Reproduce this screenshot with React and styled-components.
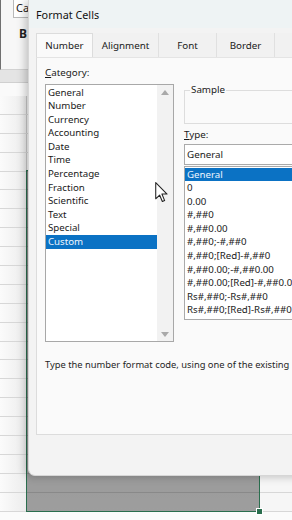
import React from 'react';
import styled, { createGlobalStyle } from 'styled-components';

const Global = createGlobalStyle`
  html, body { margin: 0; padding: 0; }
  body {
    width: 292px; height: 520px; overflow: hidden;
    font-family: "Noto Sans", "Open Sans", "DejaVu Sans", sans-serif;
    color: #1a1a1a;
  }
`;

const Page = styled.div`
  position: relative;
  width: 292px;
  height: 520px;
  overflow: hidden;
  background: #fbfbfb;
`;

/* ---------- spreadsheet behind ---------- */
const Sheet = styled.div`
  display: flex;
  flex-direction: column;
  width: 100%;
  height: 100%;
`;

const Ribbon = styled.div`
  flex: none;
  height: 70px;
  box-sizing: border-box;
  background: #f7f7f7;
  border-left: 1px solid #707070;
  border-bottom: 1px solid #d2d2d2;
  display: flex;
  flex-direction: column;
  padding-left: 12px;
`;

const FontBox = styled.div`
  width: 40px;
  height: 18px;
  box-sizing: border-box;
  border: 1px solid #b9b9b9;
  border-top: none;
  background: #fff;
  font-size: 11px;
  line-height: 16px;
  padding-left: 2px;
  color: #222;
`;

const BoldBtn = styled.div`
  margin: 9px 0 0 6px;
  font-size: 12px;
  font-weight: 700;
  line-height: 13px;
  color: #222;
`;

const HeaderBand = styled.div`
  flex: none;
  height: 12px;
  background: #e4e4e4;
  border-bottom: 1px solid #d0d0d0;
`;

const Blank = styled.div`
  flex: none;
  height: 13px;
  background: #fafafa;
`;

const Row = styled.div`
  flex: none;
  height: 18.9px;
  box-sizing: border-box;
  border-bottom: 1px solid #d7d7d7;
  display: flex;
  background: #f6f6f6;
`;

const Cell = styled.div`
  width: 27px;
  flex: none;
  box-sizing: border-box;
  border-right: 1px solid #c8c8c8;
  background: linear-gradient(to right, #fbfbfb, #ececec);
`;

const Selection = styled.div`
  position: absolute;
  left: 26px;
  top: 170px;
  width: 234px;
  height: 342px;
  box-sizing: border-box;
  border: 1.5px solid #2a6e4e;
  background: linear-gradient(to bottom, rgba(0,0,0,0.44), rgba(0,0,0,0.36));
`;

const FillHandle = styled.div`
  position: absolute;
  right: -4px;
  bottom: -4px;
  width: 5px;
  height: 5px;
  background: #2a6e4e;
  border: 1px solid #fff;
`;

/* ---------- dialog ---------- */
const Dialog = styled.div`
  position: absolute;
  left: 28px;
  top: 0;
  width: 340px;
  height: 476px;
  box-sizing: border-box;
  background: #f3f3f3;
  border-left: 1px solid #d6d6d6;
  border-bottom: 1px solid #d6d6d6;
  border-bottom-left-radius: 7px;
  box-shadow: -3px 1px 8px rgba(0,0,0,0.22);
  display: flex;
  flex-direction: column;
  overflow: hidden;
`;

const TitleBar = styled.div`
  flex: none;
  height: 28px;
  display: flex;
  align-items: center;
  padding-left: 7px;
  background: #eef3f4;
  font-size: 10.8px;
  color: #111;
`;

const TabRow = styled.div`
  flex: none;
  display: flex;
  margin: 5px 0 0 7px;
  height: 24px;
`;

const Tab = styled.div`
  flex: none;
  width: ${p => p.$w}px;
  box-sizing: border-box;
  display: flex;
  align-items: center;
  justify-content: center;
  font-size: 9.8px;
  color: #1a1a1a;
  background: ${p => (p.$active ? '#fafafa' : '#f1f1f1')};
  border-right: 1px solid ${p => (p.$active ? '#dcdcdc' : '#e0e0e0')};
  border-left: ${p => (p.$active ? '1px solid #dcdcdc' : 'none')};
  border-top: ${p => (p.$active ? '1px solid #dcdcdc' : 'none')};
`;

const Panel = styled.div`
  flex: none;
  height: 378px;
  margin-left: 7px;
  box-sizing: border-box;
  background: #fafafa;
  border-left: 1px solid #dcdcdc;
  border-top: 1px solid #e4e4e4;
  border-bottom: 1px solid #dcdcdc;
  padding: 8px 0 0 8px;
  display: flex;
  flex-direction: column;
`;

const Columns = styled.div`
  display: flex;
  gap: 10px;
`;

const LeftCol = styled.div`
  width: 129px;
  flex: none;
  display: flex;
  flex-direction: column;
`;

const RightCol = styled.div`
  flex: 1;
  display: flex;
  flex-direction: column;
`;

const Label = styled.div`
  font-size: 9.8px;
  line-height: 14px;
  height: 14px;
  color: #1a1a1a;
  margin-top: ${p => p.$mt || 0}px;
  u { text-decoration: underline; text-underline-offset: 1px; }
`;

const ListBox = styled.div`
  margin-top: 4px;
  height: 258px;
  box-sizing: border-box;
  border: 1px solid #a8a8a8;
  background: #fff;
  display: flex;
`;

const Items = styled.div`
  flex: 1;
  padding-top: 0.5px;
  min-width: 0;
`;

const Item = styled.div`
  height: 13.6px;
  line-height: 13.6px;
  font-size: 9.7px;
  padding-left: 2px;
  white-space: nowrap;
  overflow: hidden;
  color: ${p => (p.$sel ? '#eef6ff' : '#1a1a1a')};
  background: ${p => (p.$sel ? '#0b72c4' : 'transparent')};
`;

const ScrollBar = styled.div`
  width: 16px;
  flex: none;
  background: #f2f2f2;
  display: flex;
  flex-direction: column;
  justify-content: space-between;
  align-items: center;
  padding: 5px 0 4px;
`;

const Arrow = styled.div`
  width: 0;
  height: 0;
  border-left: 4px solid transparent;
  border-right: 4px solid transparent;
  ${p => (p.$down ? 'border-top: 5px solid #a9a9a9;' : 'border-bottom: 5px solid #a9a9a9;')}
`;

const SampleBox = styled.div`
  position: relative;
  margin-top: 24px;
  height: 34px;
  box-sizing: border-box;
  border: 1px solid #dddddd;
  border-right: none;
`;

const Legend = styled.span`
  position: absolute;
  left: 5px;
  top: -8px;
  padding: 0 1px;
  background: #fafafa;
  font-size: 9.8px;
  line-height: 14px;
  color: #1a1a1a;
`;

const TypeInput = styled.div`
  margin-top: 2px;
  height: 21px;
  box-sizing: border-box;
  border: 1px solid #aaaaaa;
  border-right: none;
  background: #fff;
  font-size: 9.8px;
  line-height: 19px;
  padding-left: 2px;
`;

const TypeList = styled.div`
  margin-top: 1px;
  height: 154px;
  box-sizing: border-box;
  border: 1px solid #aaaaaa;
  border-right: none;
  background: #fff;
  padding-top: 0.5px;
`;

const Description = styled.div`
  margin-top: 16px;
  font-size: 9.35px;
  line-height: 14px;
  white-space: nowrap;
  color: #1f1f1f;
`;

const Cursor = styled.svg`
  position: absolute;
  left: 155px;
  top: 182px;
`;

const categories = [
  'General', 'Number', 'Currency', 'Accounting', 'Date', 'Time',
  'Percentage', 'Fraction', 'Scientific', 'Text', 'Special', 'Custom',
];

const types = [
  'General', '0', '0.00', '#,##0', '#,##0.00', '#,##0;-#,##0',
  '#,##0;[Red]-#,##0', '#,##0.00;-#,##0.00', '#,##0.00;[Red]-#,##0.00',
  'Rs#,##0;-Rs#,##0', 'Rs#,##0;[Red]-Rs#,##0',
];

const tabs = [
  { t: 'Number', w: 57, active: true },
  { t: 'Alignment', w: 66 },
  { t: 'Font', w: 58 },
  { t: 'Border', w: 58 },
  { t: '', w: 80 },
];

export default function App() {
  return (
    <Page>
      <Global />
      <Sheet>
        <Ribbon>
          <FontBox>Ca</FontBox>
          <BoldBtn>B</BoldBtn>
        </Ribbon>
        <HeaderBand />
        <Blank />
        {Array.from({ length: 22 }).map((_, i) => (
          <Row key={i}>
            <Cell />
          </Row>
        ))}
      </Sheet>
      <Selection>
        <FillHandle />
      </Selection>
      <Dialog>
        <TitleBar>Format Cells</TitleBar>
        <TabRow>
          {tabs.map(tb => (
            <Tab key={tb.t + tb.w} $w={tb.w} $active={tb.active}>{tb.t}</Tab>
          ))}
        </TabRow>
        <Panel>
          <Columns>
            <LeftCol>
              <Label><u>C</u>ategory:</Label>
              <ListBox>
                <Items>
                  {categories.map(c => (
                    <Item key={c} $sel={c === 'Custom'}>{c}</Item>
                  ))}
                </Items>
                <ScrollBar>
                  <Arrow />
                  <Arrow $down />
                </ScrollBar>
              </ListBox>
            </LeftCol>
            <RightCol>
              <SampleBox>
                <Legend>Sample</Legend>
              </SampleBox>
              <Label $mt={4}><u>T</u>ype:</Label>
              <TypeInput>General</TypeInput>
              <TypeList>
                {types.map(t => (
                  <Item key={t} $sel={t === 'General'}>{t}</Item>
                ))}
              </TypeList>
            </RightCol>
          </Columns>
          <Description>Type the number format code, using one of the existing</Description>
        </Panel>
      </Dialog>
      <Cursor width="13" height="21" viewBox="0 0 12 20">
        <path d="M0.5 0.5 L0.5 16 L4.2 12.4 L6.8 18.6 L9 17.7 L6.4 11.5 L11.3 11.5 Z" fill="#fff" stroke="#222" strokeWidth="1" strokeLinejoin="round" />
      </Cursor>
    </Page>
  );
}
